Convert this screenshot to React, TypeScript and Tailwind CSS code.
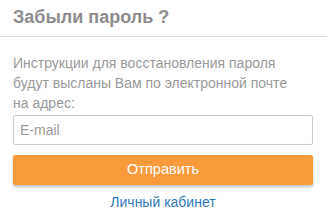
export default function App() {
  return (
    <div className="w-[327px] h-[220px] bg-white font-['Liberation_Sans',Arial,sans-serif]">
      <div className="h-[37px] border-b border-[#e0e0e0] pl-[13px] pt-[5px]">
        <h2 className="text-[18px] font-bold leading-[24px] text-[#8c8c8c]">Забыли пароль ?</h2>
      </div>
      <div className="pl-[13px] pr-[14px] pt-[16px]">
        <p className="w-[290px] text-[14px] leading-[20px] text-[#999]">
          Инструкции для восстановления пароля будут высланы Вам по электронной почте на адрес:
        </p>
        <input
          type="email"
          placeholder="E-mail"
          className="mt-[2px] block h-[30px] w-[300px] rounded-[2px] border border-[#ccc] px-[6px] text-[14px] text-[#555] placeholder:text-[#999] outline-none"
        />
        <button className="mt-[10px] block h-[30px] w-[300px] rounded-[2px] bg-[#fa9a3b] text-[14.5px] text-white shadow-[0_2px_3px_rgba(0,0,0,0.25)]">
          Отправить
        </button>
        <div className="mt-[7px] text-center leading-[20px]">
          <a href="#" className="text-[14px] text-[#2f7ab8]">Личный кабинет</a>
        </div>
      </div>
    </div>
  );
}
